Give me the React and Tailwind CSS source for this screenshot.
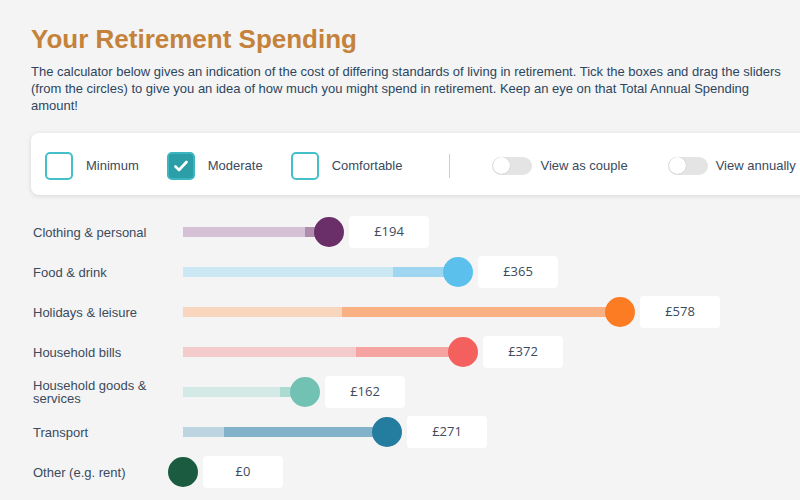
import React from 'react';

const rows = [
    { label: 'Clothing & personal', fill: 146, light: 122, knob: '#6a2e69', lightBg: '#d5c1d5', darkBg: '#ae8dae', value: '£194' },
    { label: 'Food & drink', fill: 275, light: 210, knob: '#5bc1ec', lightBg: '#cce7f4', darkBg: '#9ed6f1', value: '£365' },
    { label: 'Holidays & leisure', fill: 437, light: 159, knob: '#fc7c24', lightBg: '#f8d6be', darkBg: '#f9b183', value: '£578' },
    { label: 'Household bills', fill: 280, light: 173, knob: '#f3605e', lightBg: '#f3cbcb', darkBg: '#f5a4a1', value: '£372' },
    { label: 'Household goods & services', fill: 122, light: 97, knob: '#72c2b3', lightBg: '#d3e9e5', darkBg: '#acdbd1', value: '£162' },
    { label: 'Transport', fill: 204, light: 41, knob: '#247c9f', lightBg: '#bcd5e1', darkBg: '#81b2c9', value: '£271' },
    { label: 'Other (e.g. rent)', fill: 0, light: 0, knob: '#1b5c41', lightBg: '#d0e0d8', darkBg: '#8fb3a2', value: '£0' },
];

const Checkbox = ({ label, checked }) => (
    <div className="flex items-center gap-[13px]">
        <div
            className={
                checked
                    ? 'w-[28px] h-[28px] rounded-[5px] border-2 border-[#3bb5c0] bg-[#2c9ea8] flex items-center justify-center'
                    : 'w-[28px] h-[28px] rounded-[5px] border-2 border-[#45c0cb] bg-white'
            }
        >
            {checked && (
                <svg width="14" height="12" viewBox="0 0 14 12" fill="none">
                    <path d="M1.5 6.5 L5 10 L12.5 2" stroke="white" strokeWidth="2.6" strokeLinecap="round" strokeLinejoin="round" />
                </svg>
            )}
        </div>
        <span className="text-[13px] text-[#3b4a5c]">{label}</span>
    </div>
);

const Toggle = ({ label }) => (
    <div className="flex items-center gap-[8px]">
        <div className="w-[40px] h-[18px] rounded-full bg-[#e4e4e4] flex items-center px-[1px]">
            <div className="w-[17px] h-[17px] rounded-full bg-white shadow-[0_0_1px_rgba(0,0,0,0.25)]" />
        </div>
        <span className="text-[13px] text-[#3b4a5c] whitespace-nowrap">{label}</span>
    </div>
);

const SliderRow = ({ row }) => (
    <div className="flex items-center h-[40px]">
        <div className="w-[150px] shrink-0 pr-[15px] text-[13px] leading-[13px] text-[#3b4a5c]">{row.label}</div>
        <div className="relative h-[10px] shrink-0 flex" style={{ width: row.fill }}>
            <div className="h-full" style={{ width: row.light, background: row.lightBg }} />
            <div className="h-full flex-1" style={{ background: row.darkBg }} />
            <div
                className="absolute top-1/2 -translate-y-1/2 right-[-15px] w-[30px] h-[30px] rounded-full"
                style={{ background: row.knob }}
            />
        </div>
        <div className="ml-[20px] w-[80px] h-[32px] bg-white rounded-[4px] flex items-center justify-center text-[13px] text-[#3e4b5e] font-['Open_Sans',sans-serif]">
            {row.value}
        </div>
    </div>
);

export default function App() {
    return (
        <div className="w-[800px] h-[500px] overflow-hidden bg-[#f4f4f4] font-['Liberation_Sans',Arial,sans-serif]">
            <div className="pl-[31px] w-[801px]">
                <h1 className="pt-[24px] text-[26px] leading-[30px] font-bold text-[#c4823a]">Your Retirement Spending</h1>
                <p className="mt-[9px] text-[13px] leading-[17px] text-[#2c4660] w-[762px]">
                    The calculator below gives an indication of the cost of differing standards of living in retirement. Tick the boxes and drag the sliders (from the circles) to give you an idea of how much you might spend in retirement. Keep an eye on that Total Annual Spending amount!
                </p>

                <div className="mt-[19px] w-[800px] h-[62px] pt-[3px] bg-white rounded-[8px] shadow-[0_1px_5px_rgba(0,0,0,0.12)] flex items-center pl-[14px]">
                    <div className="flex items-center gap-[28px]">
                        <Checkbox label="Minimum" />
                        <Checkbox label="Moderate" checked />
                        <Checkbox label="Comfortable" />
                    </div>
                    <div className="ml-[47px] w-px h-[24px] bg-[#cfcfcf]" />
                    <div className="ml-[42px] flex items-center gap-[40px]">
                        <Toggle label="View as couple" />
                        <Toggle label="View annually" />
                    </div>
                </div>

                <div className="mt-[17px] pl-[2px]">
                    {rows.map((row) => (
                        <SliderRow key={row.label} row={row} />
                    ))}
                </div>
            </div>
        </div>
    );
}
